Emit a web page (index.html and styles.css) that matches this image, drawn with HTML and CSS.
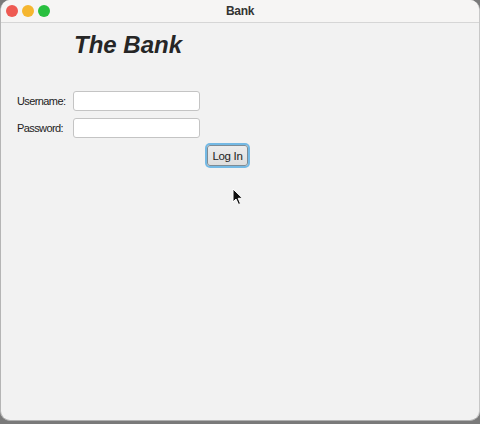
FILE: index.html
```html
<!DOCTYPE html>
<html>
<head>
<meta charset="utf-8">
<link rel="stylesheet" href="styles.css">
</head>
<body>
<div class="window">
  <div class="titlebar">
    <div class="lights">
      <span class="light red"></span>
      <span class="light yellow"></span>
      <span class="light green"></span>
    </div>
    <div class="wtitle">Bank</div>
  </div>
  <div class="content">
    <div class="grid">
      <h1 class="heading">The Bank</h1>
      <label class="label r1">Username:</label>
      <div class="field r1"></div>
      <label class="label r2">Password:</label>
      <div class="field r2"></div>
      <button class="btn">Log In</button>
    </div>
  </div>
  <svg class="cursor" width="12" height="18" viewBox="0 0 12 18">
    <path d="M1 1 L1 14 L4 11 L6.5 16.5 L8.5 15.6 L6.2 10.3 L10.5 10.3 Z" fill="#111" stroke="#fff" stroke-width="1"/>
  </svg>
</div>
</body>
</html>
```

FILE: styles.css
```css
html, body {
  margin: 0;
  padding: 0;
  width: 480px;
  height: 424px;
  background: #7a7a7a;
  overflow: hidden;
}
.window {
  position: relative;
  width: 480px;
  height: 421px;
  background: #f2f2f2;
  border-radius: 10px;
  box-sizing: border-box;
  border-left: 1px solid #b5b5b5;
  border-right: 1px solid #c8c8c8;
  border-bottom: 1px solid #b0b0b0;
  overflow: hidden;
  font-family: "Liberation Sans", Arial, sans-serif;
  color: #222;
}
.titlebar {
  position: relative;
  height: 22px;
  background: #f6f5f4;
  border-bottom: 1px solid #d6d6d6;
  display: flex;
  align-items: center;
  justify-content: center;
}
.lights {
  position: absolute;
  left: 5px;
  top: 5px;
  display: flex;
  gap: 4px;
}
.light {
  width: 12px;
  height: 12px;
  border-radius: 50%;
  display: block;
}
.red { background: #ee5a52; }
.yellow { background: #f5b62f; }
.green { background: #29c03f; }
.wtitle {
  font-size: 12px;
  font-weight: bold;
  letter-spacing: -0.3px;
  color: #333;
}
.content {
  padding: 7px 0 0 16px;
}
.grid {
  display: grid;
  grid-template-columns: 48px 127px 41px;
  justify-content: start;
  column-gap: 8px;
  row-gap: 7px;
  align-items: center;
}
.heading {
  grid-column: 2 / 4;
  grid-row: 1;
  margin: 1px 0 25px 1px;
  font-size: 24px;
  font-weight: bold;
  font-style: italic;
  color: #262626;
  line-height: 28px;
}
.label {
  grid-column: 1;
  font-size: 11px;
  letter-spacing: -0.6px;
  white-space: nowrap;
  color: #222;
}
.r1 { grid-row: 2; }
.r2 { grid-row: 3; }
.field {
  grid-column: 2;
  height: 20px;
  box-sizing: border-box;
  background: #fff;
  border: 1px solid #c4c4c4;
  border-radius: 3px;
}
.btn {
  grid-column: 3;
  grid-row: 4;
  justify-self: start;
  margin-left: -1px;
  width: 41px;
  height: 21px;
  box-sizing: border-box;
  padding: 0;
  font-family: "Liberation Sans", Arial, sans-serif;
  font-size: 11.5px;
  letter-spacing: -0.3px;
  color: #222;
  background: linear-gradient(#ececec, #dedede);
  border: 1px solid #7d8c96;
  border-radius: 3px;
  box-shadow: 0 0 0 2px #74b9e4;
}
.cursor {
  position: absolute;
  left: 231px;
  top: 188px;
}
```
